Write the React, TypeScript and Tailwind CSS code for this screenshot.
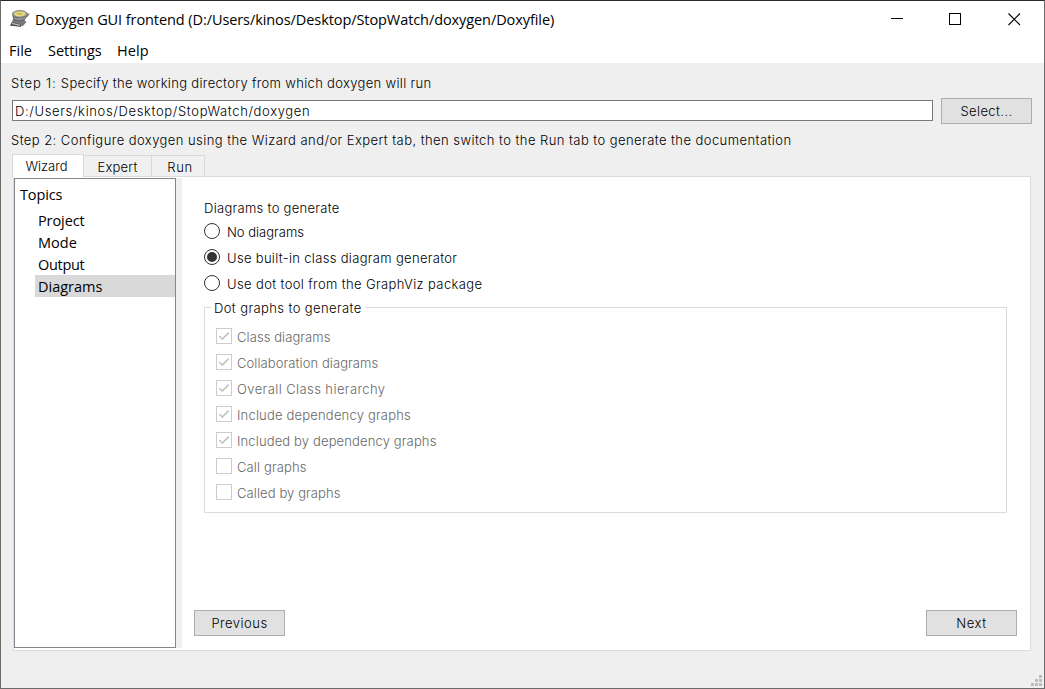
const ui = "font-['Open_Sans','Noto_Sans',sans-serif] text-[14.5px] whitespace-pre";

const radios = [
  { label: 'No diagrams', on: false, ls: 'tracking-[0px]' },
  { label: 'Use built-in class diagram generator', on: true, ls: 'tracking-[0.32px]' },
  { label: 'Use dot tool from the GraphViz package', on: false, ls: 'tracking-[0.37px]' },
];

const checks = [
  { label: 'Class diagrams', on: true, ls: 'tracking-[0.08px]' },
  { label: 'Collaboration diagrams', on: true, ls: 'tracking-[0.09px]' },
  { label: 'Overall Class hierarchy', on: true, ls: 'tracking-[0.41px]' },
  { label: 'Include dependency graphs', on: true, ls: 'tracking-[0.19px]' },
  { label: 'Included by dependency graphs', on: true, ls: 'tracking-[0.14px]' },
  { label: 'Call graphs', on: false, ls: 'tracking-[0.12px]' },
  { label: 'Called by graphs', on: false, ls: 'tracking-[0.1px]' },
];

const topics = [
  { label: 'Project', ls: 'tracking-[-0.1px]' },
  { label: 'Mode', ls: 'tracking-[0px]' },
  { label: 'Output', ls: 'tracking-[-0.3px]' },
  { label: 'Diagrams', ls: 'tracking-[0px]' },
];

function AppIcon() {
  return (
    <svg width="22" height="20" viewBox="0 0 22 20" className="block">
      <path d="M4 10 L14 10 L17.5 13 L14 17 L1.5 17 Z" fill="#77797b" />
      <path d="M3 13 L12 15.5 L12 18 L1 16.6 Z" fill="#4d4f52" />
      <path d="M3 14.4 L11 16.4" stroke="#b9bcc0" strokeWidth="1.2" />
      <path d="M3 5 L4.5 11 Q10 13.5 16 11 L18.5 5 Z" fill="#66676a" />
      <path d="M5 9 Q10 11.5 16 9" stroke="#a9acb0" strokeWidth="1.3" fill="none" />
      <path d="M17 4 L20.5 4.8 L19 7.5 L17 8.5 Z" fill="#77797d" />
      <ellipse cx="10.8" cy="4.9" rx="7.8" ry="3.8" fill="#8c8d8c" />
      <ellipse cx="10.8" cy="4.8" rx="6" ry="2.6" fill="#e6d67c" />
      <path d="M8 4.4 L13 5.2" stroke="#b49a3c" strokeWidth="0.8" />
    </svg>
  );
}

function Radio({ on }: { on: boolean }) {
  return (
    <span className="flex size-4 shrink-0 items-center justify-center rounded-full border border-[#333] bg-white">
      {on && <span className="size-[10px] rounded-full bg-[#333]" />}
    </span>
  );
}

function Check({ on }: { on: boolean }) {
  return (
    <span className="block size-4 shrink-0 border border-[#cccccc] bg-white">
      {on && (
        <svg width="14" height="14" viewBox="0 0 14 14" className="block">
          <path d="M2.3 7 L5.3 10 L11.7 3.6" fill="none" stroke="#c4c4c4" strokeWidth="1.6" />
        </svg>
      )}
    </span>
  );
}

function Button({ label, ls }: { label: string; ls: string }) {
  return (
    <button className={`flex h-[26px] w-[91px] shrink-0 items-center justify-center border border-[#adadad] bg-[#e1e1e1] pt-px ${ls}`}>
      {label}
    </button>
  );
}

function Grip() {
  return (
    <svg width="11" height="11" viewBox="0 0 11 11" className="block" fill="#bdbdbd">
      <rect x="8" y="0" width="3" height="3" />
      <rect x="4" y="4" width="3" height="3" />
      <rect x="8" y="4" width="3" height="3" />
      <rect x="0" y="8" width="3" height="3" />
      <rect x="4" y="8" width="3" height="3" />
      <rect x="8" y="8" width="3" height="3" />
    </svg>
  );
}

export default function App() {
  return (
    <div className="flex h-[689px] w-[1045px] flex-col overflow-hidden border border-[#6b6b6b] border-t-[#2b2a2c] bg-[#efefef] font-['Inter','Liberation_Sans',sans-serif] text-[13px] font-light whitespace-pre text-black">
      <header className="flex h-[34px] shrink-0 items-center bg-white pl-[8px]">
        <div className="mt-px">
          <AppIcon />
        </div>
        <h1 className={`${ui} mt-[3px] ml-[4px] font-normal tracking-[-0.08px]`}>
          Doxygen GUI frontend (D:/Users/kinos/Desktop/StopWatch/doxygen/Doxyfile)
        </h1>
        <div className="mt-[3px] mr-[23px] ml-auto flex gap-[46px]">
          <svg width="13" height="13" className="block"><path d="M1 5.5H13" stroke="#000" /></svg>
          <svg width="13" height="13" className="block"><rect x="0.5" y="0.5" width="11" height="11" fill="none" stroke="#000" /></svg>
          <svg width="13" height="13" className="block"><path d="M0.5 0.5L12 12M12 0.5L0.5 12" stroke="#000" strokeWidth="1.1" /></svg>
        </div>
      </header>

      <nav className={`${ui} flex h-[28px] shrink-0 items-center bg-white pl-[8px] font-normal`}>
        <span className="w-[39px] pt-[3px] tracking-[0px]">File</span>
        <span className="w-[69px] pt-[3px] tracking-[0px]">Settings</span>
        <span className="pt-[3px] tracking-[0.1px]">Help</span>
      </nav>

      <main className="flex flex-1 flex-col pr-[12px] pl-[11px]">
        <div className="-ml-px flex h-[35px] items-center pt-[6px]">
          <span className="tracking-[0.8px]">Step 1: </span>
          <span className="tracking-[0.33px]">Specify the working directory from which doxygen will run</span>
        </div>
        <div className="flex h-[26px] items-start gap-[8px]">
          <div className="mt-[2px] flex h-[21px] w-[921px] items-center border border-[#7a7a7a] bg-white pt-[2px] pl-[2px] tracking-[0.65px]">
            D:/Users/kinos/Desktop/StopWatch/doxygen
          </div>
          <Button label="Select..." ls="tracking-[0.4px]" />
        </div>
        <div className="-ml-px flex h-[30px] items-center pt-[4px] tracking-[0.44px]">
          Step 2: Configure doxygen using the Wizard and/or Expert tab, then switch to the Run tab to generate the documentation
        </div>

        <div className="relative z-10 flex h-[22px] items-end">
          <div className="-mb-px flex h-[23px] w-[72px] items-center justify-center border border-b-0 border-[#d9d9d9] bg-white pt-[2px] pr-[3px] tracking-[0px]">Wizard</div>
          <div className="flex h-[21px] w-[68px] items-center justify-center border-t border-r border-[#d9d9d9] bg-[#f0f0f0] pt-[4px] tracking-[0.2px]">Expert</div>
          <div className="flex h-[21px] w-[53px] items-center justify-center border-t border-r border-[#d9d9d9] bg-[#f0f0f0] pt-[4px] pl-[4px] tracking-[0.6px]">Run</div>
        </div>

        <div className="ml-px flex h-[475px] w-[1018px] border border-[#dcdcdc] bg-white pt-px">
          <aside className={`${ui} h-[470px] w-[162px] border border-[#828790] bg-white font-normal`}>
            <div className="flex h-[30px] items-center pt-px pl-[5px] tracking-[-0.15px]">Topics</div>
            {topics.map((t) => (
              <div
                key={t.label}
                className={`ml-[20px] flex h-[22px] items-center pt-[2px] pl-[3px] ${t.ls} ${t.label === 'Diagrams' ? 'bg-[#d9d9d9]' : ''}`}
              >
                {t.label}
              </div>
            ))}
          </aside>
          <div className="h-[470px] w-[6px] bg-[#f0f0f0]" />

          <section className="flex flex-1 flex-col pr-[13px] pl-[12px]">
            <div className="pl-[10px]">
              <div className="flex h-[40px] items-end leading-[20px] tracking-[0.3px]">Diagrams to generate</div>
              {radios.map((r) => (
                <label key={r.label} className="flex h-[26px] items-center">
                  <Radio on={r.on} />
                  <span className={`pt-[4px] pl-[7px] ${r.ls}`}>{r.label}</span>
                </label>
              ))}
              <fieldset className="relative mt-[11px] h-[206px] w-[803px] border border-[#dcdcdc] pt-[15px] pl-[11px]">
                <div className="absolute -top-[9px] left-[6px] flex h-[20px] items-center bg-white px-[3px] tracking-[0.4px]">Dot graphs to generate</div>
                {checks.map((c) => (
                  <label key={c.label} className="flex h-[26px] items-center text-[#686868]">
                    <Check on={c.on} />
                    <span className={`pt-[4px] pl-[5px] ${c.ls}`}>{c.label}</span>
                  </label>
                ))}
              </fieldset>
            </div>
            <div className="mt-auto mb-[14px] flex justify-between">
              <Button label="Previous" ls="tracking-[0.5px]" />
              <Button label="Next" ls="tracking-[0.6px]" />
            </div>
          </section>
        </div>
        <div className="mt-auto -mr-[10px] mb-[2px] flex justify-end">
          <Grip />
        </div>
      </main>
    </div>
  );
}
